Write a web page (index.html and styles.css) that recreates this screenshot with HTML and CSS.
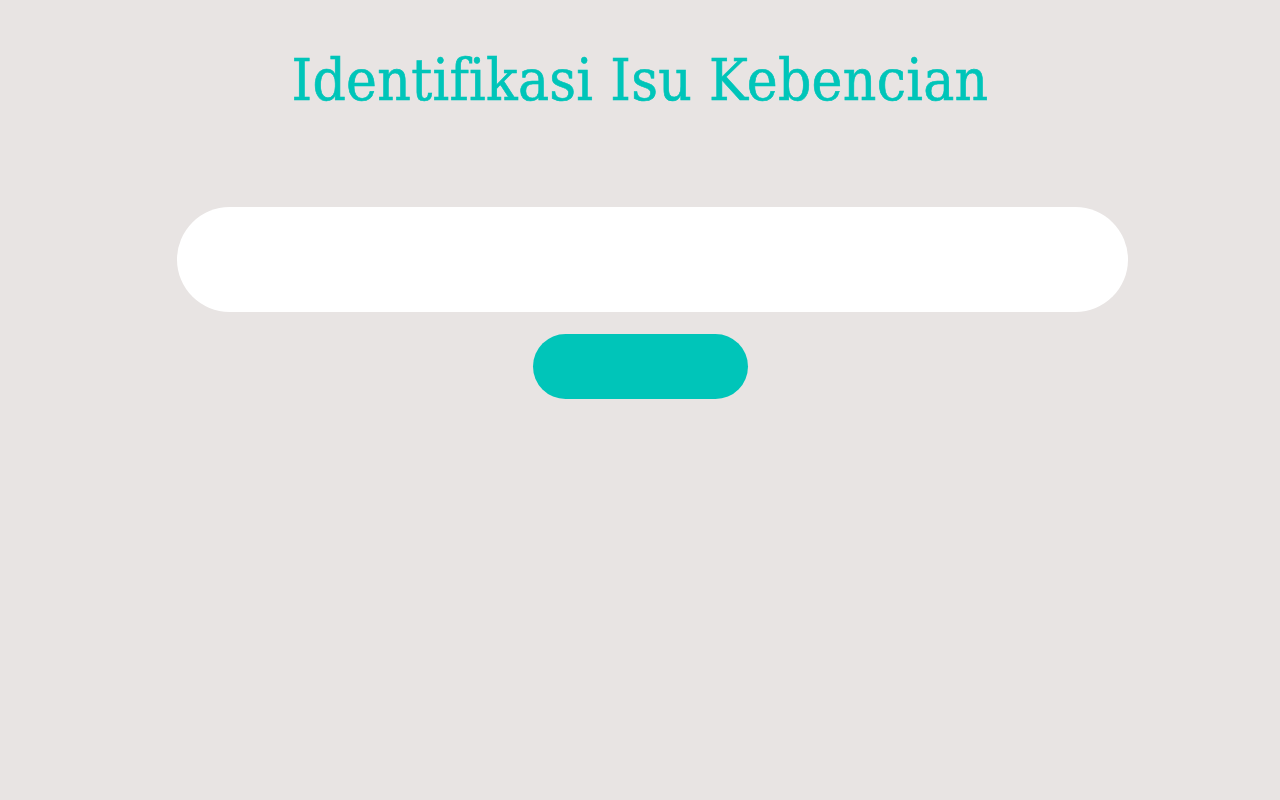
FILE: index.html
```html
<!DOCTYPE html>
<html lang="id">
<head>
<meta charset="utf-8">
<title>Identifikasi Isu Kebencian</title>
<link rel="stylesheet" href="styles.css">
</head>
<body>
<main class="page">
  <h1 class="title">Identifikasi Isu Kebencian</h1>
  <form class="form">
    <input class="field" type="text" aria-label="Teks">
    <button class="submit" type="button" aria-label="Kirim"></button>
  </form>
</main>
</body>
</html>
```

FILE: styles.css
```css
html, body {
  margin: 0;
  padding: 0;
  background: #e8e4e3;
  height: 100%;
}
.page {
  display: flex;
  flex-direction: column;
  align-items: center;
  padding-top: 40px;
}
.title {
  margin: 0;
  font-family: "DejaVu Serif Condensed", "DejaVu Serif", serif;
  font-stretch: condensed;
  font-weight: normal;
  font-size: 58px;
  letter-spacing: 0.3px;
  line-height: 80px;
  color: #00c5b9;
  -webkit-text-stroke: 0.6px #00c5b9;
}
.form {
  display: flex;
  flex-direction: column;
  align-items: center;
  margin-top: 87px;
  width: 100%;
}
.field {
  box-sizing: border-box;
  width: 951px;
  height: 105px;
  margin-left: 25px;
  border: none;
  border-radius: 53px;
  background: #ffffff;
  outline: none;
}
.submit {
  width: 215px;
  height: 65px;
  margin-top: 22px;
  border: none;
  border-radius: 33px;
  background: #00c5b9;
}
```
